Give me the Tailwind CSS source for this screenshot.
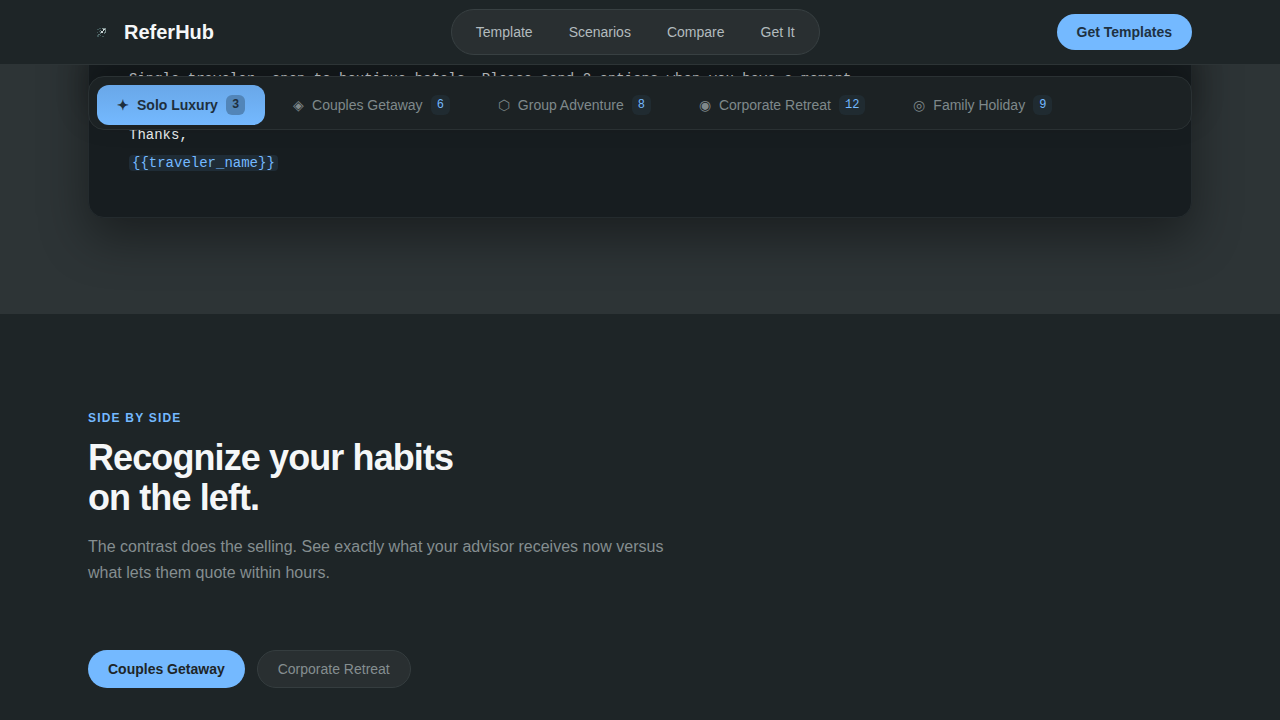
<!DOCTYPE html>
<html lang="en">
<head>
  <meta charset="UTF-8" />
  <title>ReferHub</title>
  <meta name="viewport" content="width=device-width, initial-scale=1" />
  <script src="https://cdn.jsdelivr.net/npm/@tailwindcss/browser@4"></script>
</head>
<body class="bg-[#1e2527] text-[#f5f7f8] font-['Liberation_Sans',Arial,sans-serif] min-h-screen overflow-x-hidden">

  <!-- Header -->
  <header class="fixed inset-x-0 top-0 z-50 border-b border-[#2d3436] bg-[#1e2527]">
    <div class="max-w-[1184px] mx-auto px-10 h-16 flex items-center justify-between">
      <a href="#" class="flex items-center gap-2 text-xl font-bold">
        <svg class="w-7 h-7" viewBox="0 0 28 28" fill="none" aria-hidden="true">
          <path d="M9 11h2v1H9zM11 13h1v1h-1zM9 14h1v1H9zM9 17h2v2H9zM12 17h1v1h-1zM14 18h2v1h-2zM11 10h2v1h-2z" fill="#3f5657" />
          <path d="M12 14h1v2h-1zM10 16h2v1h-2zM12 12h1v1h-1zM16 14h1v2h-1z" fill="#5c7273" />
          <path d="M14 10h4v1h-4zM17 11h1v4h-1z" fill="#7a8b8b" />
          <path d="M13 13h2v2h-2zM15 11h1v2h-1zM16 11h1v1h-1z" fill="#ccd6d6" />
        </svg>
        ReferHub
      </a>
      <nav class="flex items-center p-1.5 rounded-full border border-[#384042] bg-[#292f31] text-sm text-[#b2bbbe]">
        <a href="#template" class="px-[18px] py-1.5">Template</a>
        <a href="#scenarios" class="px-[18px] py-1.5">Scenarios</a>
        <a href="#compare" class="px-[18px] py-1.5">Compare</a>
        <a href="#get" class="px-[18px] py-1.5">Get It</a>
      </nav>
      <a href="#get" class="px-5 py-2 rounded-full bg-[#74b9ff] text-[#1e3142] text-sm font-bold">Get Templates</a>
    </div>
  </header>

  <main>
    <!-- Template text with the scenario tabs stuck over it -->
    <section id="template" class="relative bg-[#2d3436] pb-24">
      <div class="max-w-[1184px] mx-auto px-10">
        <div class="px-10 pt-16 pb-10 rounded-b-2xl border border-[#242b2e] bg-[#171d20] shadow-[0_20px_48px_rgba(0,0,0,0.4)] text-sm leading-7 text-[#e8ecee] font-['Liberation_Mono','Courier_New',monospace]">
          <p>Single traveler, open to boutique hotels. Please send 2 options when you have a moment.</p>
          <p class="mt-7">Thanks,</p>
          <p><span class="px-[3px] rounded-sm bg-[#1f2c36] text-[#74b9ff]">{{traveler_name}}</span></p>
        </div>
      </div>
      <div class="absolute inset-x-0 top-[76px]">
        <div class="max-w-[1184px] mx-auto px-10">
          <div id="scenarios" class="flex gap-2 px-2 pt-2 pb-1 rounded-2xl border border-[#2a3133] bg-[#1c2224] shadow-[0_-16px_32px_rgba(0,0,0,0.3)] text-sm text-[#7f898b]">
            <button type="button" class="flex items-center gap-2 px-5 py-2.5 rounded-xl bg-linear-to-b from-[#69a7e8] to-[#74b9ff] text-[#1e2f3d] font-bold"><span>✦</span>Solo Luxury<span class="px-1.5 h-5 rounded-md bg-[#5285b8] text-xs leading-5 font-['Liberation_Mono',monospace]">3</span></button>
            <button type="button" class="flex items-center gap-2 px-5 py-2.5 rounded-xl"><span>◈</span>Couples Getaway<span class="px-1.5 h-5 rounded-md bg-[#202b31] text-[#74b9ff] text-xs leading-5 font-['Liberation_Mono',monospace]">6</span></button>
            <button type="button" class="flex items-center gap-2 px-5 py-2.5 rounded-xl"><span>⬡</span>Group Adventure<span class="px-1.5 h-5 rounded-md bg-[#202b31] text-[#74b9ff] text-xs leading-5 font-['Liberation_Mono',monospace]">8</span></button>
            <button type="button" class="flex items-center gap-2 px-5 py-2.5 rounded-xl"><span>◉</span>Corporate Retreat<span class="px-1.5 h-5 rounded-md bg-[#202b31] text-[#74b9ff] text-xs leading-5 font-['Liberation_Mono',monospace]">12</span></button>
            <button type="button" class="flex items-center gap-2 px-5 py-2.5 rounded-xl"><span>◎</span>Family Holiday<span class="px-1.5 h-5 rounded-md bg-[#202b31] text-[#74b9ff] text-xs leading-5 font-['Liberation_Mono',monospace]">9</span></button>
          </div>
        </div>
      </div>
    </section>

    <!-- Comparison -->
    <section id="compare" class="relative bg-[#1e2527] pt-24 pb-8">
      <div class="max-w-[1184px] mx-auto px-10">
        <p class="text-xs font-bold uppercase tracking-widest text-[#74b9ff]">Side by side</p>
        <h2 class="mt-3 text-4xl leading-10 font-bold tracking-tight">Recognize your habits<br>on the left.</h2>
        <p class="mt-4 max-w-[600px] text-base leading-[26px] text-[#858e90]">The contrast does the selling. See exactly what your advisor receives now versus what lets them quote within hours.</p>
        <div class="mt-16 flex gap-3 text-sm">
          <button type="button" class="px-5 py-[9px] rounded-full bg-[#74b9ff] text-[#1e2527] font-bold">Couples Getaway</button>
          <button type="button" class="px-5 py-2 rounded-full border border-[#353d3f] bg-[#292f31] text-[#858e90]">Corporate Retreat</button>
        </div>
      </div>
    </section>
  </main>

</body>
</html>
